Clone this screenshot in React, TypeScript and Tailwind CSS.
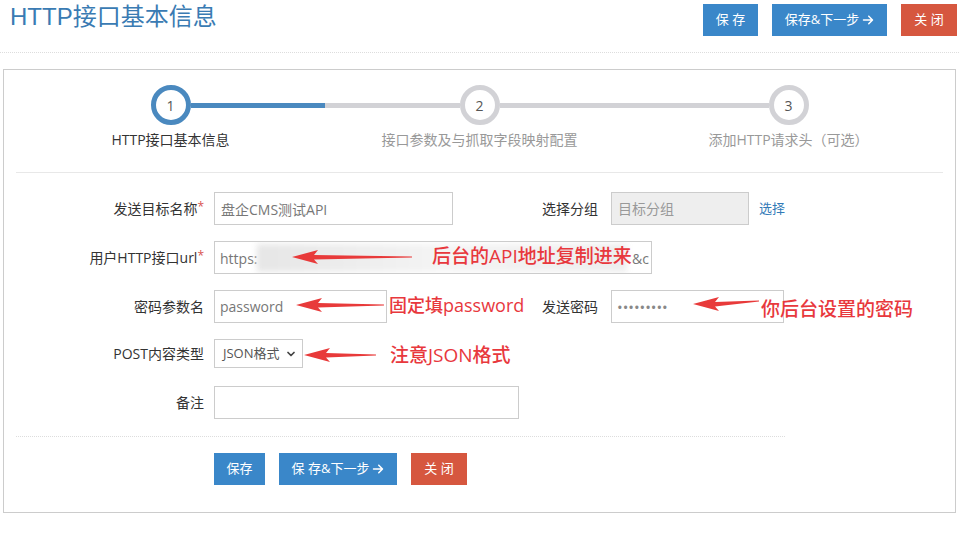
import React from 'react';
import { ChevronDown } from 'lucide-react';

const font = { fontFamily: '"Open Sans", "Noto Sans CJK SC", sans-serif' };

function ArrowIcon() {
  return (
    <svg viewBox="0 0 448 512" className="w-[12px] h-[12px] fill-white inline-block ml-[3px]">
      <path d="M438.6 278.6c12.5-12.5 12.5-32.8 0-45.3l-160-160c-12.5-12.5-32.8-12.5-45.3 0s-12.5 32.8 0 45.3L338.8 224 32 224c-17.7 0-32 14.3-32 32s14.3 32 32 32l306.7 0L233.4 393.4c-12.5 12.5-12.5 32.8 0 45.3s32.8 12.5 45.3 0l160-160z" />
    </svg>
  );
}

function Btn({ children, red, w }: { children: React.ReactNode; red?: boolean; w: string }) {
  return (
    <button
      className={`${w} h-[32px] text-[13px] text-white flex items-center justify-center ${red ? 'bg-[#d6573f]' : 'bg-[#3a87c9]'}`}
    >
      {children}
    </button>
  );
}

// red annotation arrow pointing left; tail may sit a bit higher than the tip
function RedArrow({ x, y, len, rise = 0 }: { x: number; y: number; len: number; rise?: number }) {
  const pts = `0,8 26,1 22,6 ${len},${7.4 - rise} ${len},${8.4 - rise} 22,10.6 26,15`;
  return (
    <svg className="absolute overflow-visible" style={{ left: x, top: y - 8 }} width={len} height={16}>
      <polygon points={pts} fill="#e83a3a" />
    </svg>
  );
}

function Note({ x, y, size, children }: { x: number; y: number; size: number; children: React.ReactNode }) {
  return (
    <div
      className="absolute text-[#e8383d] font-medium leading-none whitespace-nowrap"
      style={{ left: x, top: y - size / 2, fontSize: size }}
    >
      {children}
    </div>
  );
}

function Step({ n, label, active, left, right }: { n: number; label: string; active?: boolean; left: string; right: string }) {
  return (
    <div className="flex flex-col items-center">
      <div className="flex items-center w-full">
        <div className={`flex-1 h-[5px] ${left}`} />
        <div
          className={`w-10 h-10 rounded-full border-[5px] bg-white flex items-center justify-center text-[14px] text-[#555] ${
            active ? 'border-[#4a89bf]' : 'border-[#d2d2d6]'
          }`}
        >
          {n}
        </div>
        <div className={`flex-1 h-[5px] ${right}`} />
      </div>
      <div className={`mt-[5px] text-[14px] leading-5 ${active ? 'text-[#333]' : 'text-[#999]'}`}>{label}</div>
    </div>
  );
}

function Label({ children, w = 'w-[198px]', req }: { children: React.ReactNode; w?: string; req?: boolean }) {
  return (
    <div className={`${w} shrink-0 text-right pr-[10px] text-[14px] text-[#333]`}>
      {children}
      {req && <span className="text-[#d9534f] text-[12px] align-top">*</span>}
    </div>
  );
}

export default function App() {
  return (
    <div className="relative w-[959px] h-[540px] bg-white overflow-hidden" style={font}>
      {/* header */}
      <div className="flex justify-between h-[53px] border-b border-dotted border-[#ddd] pl-[10px] pr-[2px]">
        <h1 className="text-[24px] text-[#3a7bb3] leading-none pt-[5px]" style={{ fontFamily: '"Liberation Sans", "Noto Sans CJK SC", sans-serif' }}>
          HTTP接口基本信息
        </h1>
        <div className="flex gap-[14px] pt-[4px]">
          <Btn w="w-[55px]">保 存</Btn>
          <Btn w="w-[115px]">保存&amp;下一步<ArrowIcon /></Btn>
          <Btn w="w-[56px]" red>关 闭</Btn>
        </div>
      </div>

      {/* panel */}
      <div className="mx-[3px] mt-[16px] border border-[#ccc] px-3 pt-[15px] pb-[27px]">
        <div className="grid grid-cols-3">
          <Step n={1} label="HTTP接口基本信息" active left="bg-transparent" right="bg-[#4a89bf]" />
          <Step n={2} label="接口参数及与抓取字段映射配置" left="bg-[#d2d2d6]" right="bg-[#d2d2d6]" />
          <Step n={3} label="添加HTTP请求头（可选）" left="bg-[#d2d2d6]" right="bg-transparent" />
        </div>

        <div className="mt-[22px] border-t border-[#e8e8e8]" />

        <div className="mt-[19px]">
          <div className="flex items-center h-[33px] mb-4">
            <Label req>发送目标名称</Label>
            <input
              readOnly
              value="盘企CMS测试API"
              className="w-[239px] h-[33px] border border-[#ccc] px-[6px] text-[14px] text-[#777] outline-none"
            />
            <Label w="w-[158px]">
              <span className="pr-[3px]">选择分组</span>
            </Label>
            <input
              readOnly
              placeholder="目标分组"
              className="w-[138px] h-[33px] border border-[#ccc] bg-[#eee] px-[6px] text-[14px] placeholder:text-[#999] outline-none"
            />
            <a className="ml-[10px] text-[13px] text-[#337ab7]">选择</a>
          </div>

          <div className="flex items-center h-[33px] mb-4">
            <Label req>用户HTTP接口url</Label>
            <div className="relative w-[438px] h-[33px] border border-[#ccc] overflow-hidden">
              <span className="absolute left-[5px] top-[6px] text-[14px] text-[#777]">https:</span>
              <span className="absolute right-[2px] top-[6px] text-[14px] text-[#777]">&amp;c</span>
              <div className="absolute left-[42px] top-[2px] w-[370px] h-[28px] bg-gradient-to-r from-[#e6e6e6] via-[#f4f4f4] to-[#ededed] blur-[3px]" />
            </div>
          </div>

          <div className="flex items-center h-[33px] mb-4">
            <Label>密码参数名</Label>
            <input
              readOnly
              value="password"
              className="w-[173px] h-[33px] border border-[#ccc] px-[5px] text-[14px] text-[#777] outline-none"
            />
            <div className="w-[224px] shrink-0 text-right pr-[13px] text-[14px] text-[#333]">发送密码</div>
            <input
              readOnly
              type="password"
              value="123456789"
              className="w-[173px] h-[33px] border border-[#ccc] px-[5px] text-[15px] text-[#888] outline-none"
            />
          </div>

          <div className="flex items-center h-[29px] mb-[18px]">
            <Label>POST内容类型</Label>
            <div className="relative w-[89px] h-[29px] border border-[#ccc] flex items-center pl-[8px] text-[13px] text-[#555]">
              JSON格式
              <ChevronDown className="absolute right-[5px] top-[8px] w-[12px] h-[12px] text-[#444]" strokeWidth={3.5} />
            </div>
          </div>

          <div className="flex items-center h-[33px]">
            <Label>备注</Label>
            <input className="w-[305px] h-[33px] border border-[#ccc] outline-none" />
          </div>

          <div className="mt-[17px] w-[769px] border-t border-dotted border-[#ddd]" />

          <div className="mt-[16px] ml-[198px] flex gap-[14px]">
            <Btn w="w-[51px]">保存</Btn>
            <Btn w="w-[118px]">保 存&amp;下一步<ArrowIcon /></Btn>
            <Btn w="w-[56px]" red>关 闭</Btn>
          </div>
        </div>
      </div>

      {/* screenshot annotations */}
      <RedArrow x={292} y={257} len={120} />
      <Note x={432} y={256} size={19}>后台的API地址复制进来</Note>
      <RedArrow x={296} y={305} len={88} />
      <Note x={389} y={305} size={18}>固定填password</Note>
      <RedArrow x={693} y={304} len={66} rise={3} />
      <Note x={761} y={309} size={19}>你后台设置的密码</Note>
      <RedArrow x={304} y={355} len={72} />
      <Note x={390} y={355} size={19}>注意JSON格式</Note>
    </div>
  );
}
